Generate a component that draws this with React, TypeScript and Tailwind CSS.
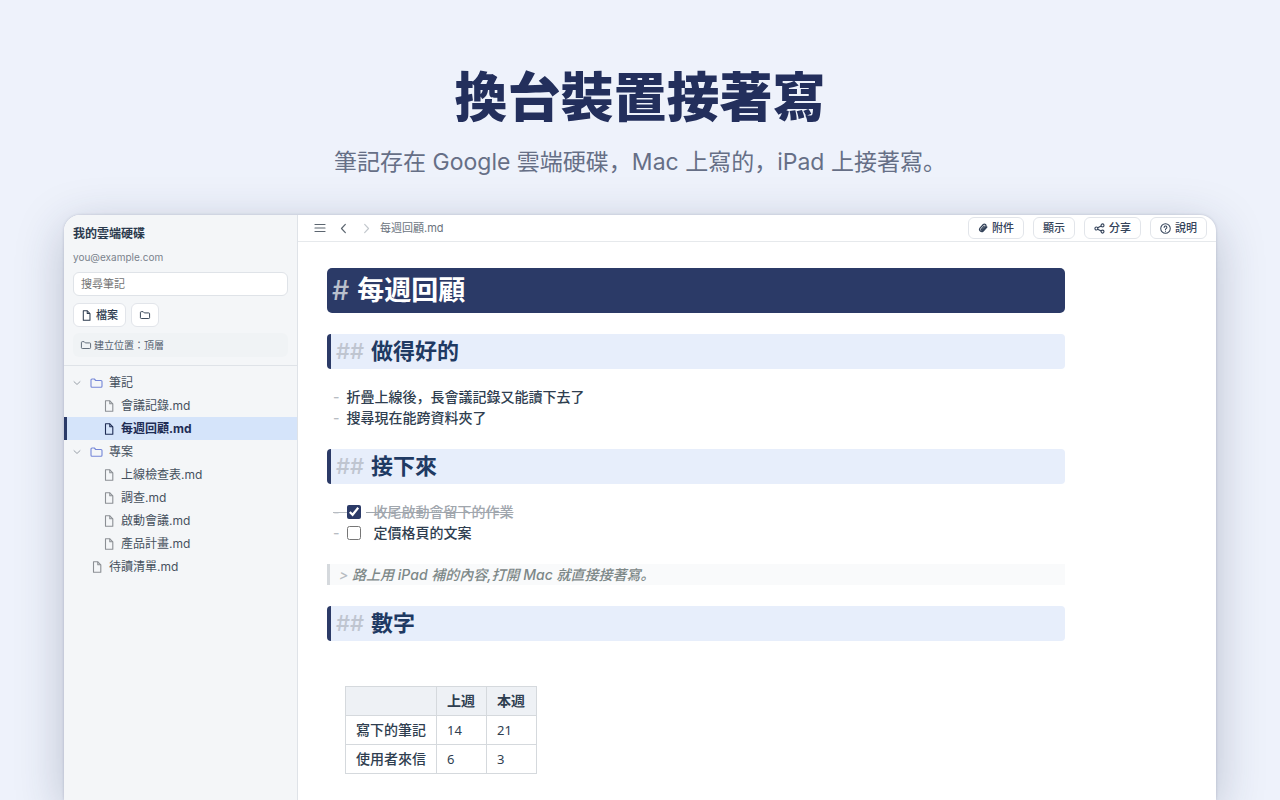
import { useState } from 'react';

interface TreeItem {
  name: string;
  depth: number;
  kind: 'folder' | 'file';
}

interface IconProps {
  className?: string;
}

const tree: TreeItem[] = [
  { name: '筆記', depth: 0, kind: 'folder' },
  { name: '會議記錄.md', depth: 1, kind: 'file' },
  { name: '每週回顧.md', depth: 1, kind: 'file' },
  { name: '專案', depth: 0, kind: 'folder' },
  { name: '上線檢查表.md', depth: 1, kind: 'file' },
  { name: '調查.md', depth: 1, kind: 'file' },
  { name: '啟動會議.md', depth: 1, kind: 'file' },
  { name: '產品計畫.md', depth: 1, kind: 'file' },
  { name: '待讀清單.md', depth: 0, kind: 'file' },
];

const rows = [
  { label: '寫下的筆記', last: 14, current: 21 },
  { label: '使用者來信', last: 6, current: 3 },
];

function FileIcon({ className }: IconProps) {
  return (
    <svg viewBox="0 0 12 12" className={className} fill="none" stroke="currentColor" strokeWidth="1.1" strokeLinejoin="round">
      <path d="M2.500 .8h4.300l3 3v7.400H2.500z" />
      <path d="M6.800 .8v3h3" />
    </svg>
  );
}

function FolderIcon({ className }: IconProps) {
  return (
    <svg viewBox="0 0 14 12" className={className} fill="none" stroke="currentColor" strokeWidth="1.1" strokeLinejoin="round">
      <path d="M1.500 3a1 1 0 0 1 1-1h2.300l1.400 1.500h5.300a1 1 0 0 1 1 1v4.700a1 1 0 0 1-1 1h-9a1 1 0 0 1-1-1z" />
    </svg>
  );
}

function ChevronIcon({ className }: IconProps) {
  return (
    <svg viewBox="0 0 12 12" className={className} fill="none" stroke="currentColor" strokeWidth="1.3" strokeLinecap="round" strokeLinejoin="round">
      <path d="M8 1.500 3.800 6 8 10.500" />
    </svg>
  );
}

function MenuIcon() {
  return (
    <svg viewBox="0 0 12 12" className="size-3" fill="none" stroke="currentColor" strokeWidth="1.2" strokeLinecap="round">
      <path d="M1 2.500h10M1 6h10M1 9.500h10" />
    </svg>
  );
}

function ClipIcon() {
  return (
    <svg viewBox="0 0 12 12" className="size-[10px]" fill="none" stroke="currentColor" strokeWidth="1.5" strokeLinecap="round" strokeLinejoin="round">
      <path d="M10.600 4.800 6.300 9.600a2.600 2.600 0 0 1-3.900-3.400l4-4.400a1.900 1.900 0 0 1 2.800 2.500L5.400 8.400a.8.8 0 0 1-1.200-1.100l3.200-3.500" />
    </svg>
  );
}

function ShareIcon() {
  return (
    <svg viewBox="0 0 12 12" className="size-[11px]" fill="none" stroke="currentColor" strokeWidth="1.2">
      <circle cx="2.600" cy="6" r="1.600" />
      <circle cx="9.300" cy="2.600" r="1.600" />
      <circle cx="9.300" cy="9.400" r="1.600" />
      <path d="m4 5.300 3.900-2M4 6.700l3.900 2" />
    </svg>
  );
}

function HelpIcon() {
  return (
    <svg viewBox="0 0 12 12" className="size-[11px]" fill="none" stroke="currentColor" strokeWidth="1.1" strokeLinecap="round">
      <circle cx="6" cy="6" r="5.200" />
      <path d="M4.500 4.800a1.500 1.500 0 1 1 2.200 1.300c-.5.300-.7.500-.7 1M6 8.800v.1" />
    </svg>
  );
}

function Sidebar() {
  const [selected, setSelected] = useState('每週回顧.md');

  return (
    <aside className="w-[234px] shrink-0 border-r border-[#dfe3e8] bg-[#f4f6f8]">
      <div className="border-b border-[#dfe3e8] px-[9px] pt-[9px] pb-2">
        <h2 className="text-[12px] leading-5 font-bold text-[#2b3a4d]">我的雲端硬碟</h2>
        <p className="mt-[3px] text-[10px] leading-5 text-[#7a828c]">you@example.com</p>
        <input
          type="search"
          aria-label="搜尋筆記"
          placeholder="搜尋筆記"
          className="mt-[5px] block h-6 w-full rounded-md border border-[#dfe3e8] bg-white px-[7px] text-[11px] text-[#2b3a4d] outline-none placeholder:text-[#757575]"
        />
        <div className="mt-[7px] flex gap-[5px]">
          <button className="flex h-6 items-center gap-1 rounded-md border border-[#e2e5ea] bg-white px-[7px] text-[11px] font-medium text-[#2b3a4d]">
            <FileIcon className="size-[11px]" />
            檔案
          </button>
          <button aria-label="新增資料夾" className="flex h-6 w-7 items-center justify-center rounded-md border border-[#e2e5ea] bg-white text-[#2b3a4d]">
            <FolderIcon className="h-[10px] w-3" />
          </button>
        </div>
        <div className="mt-[6px] flex h-6 items-center gap-[2px] rounded-md bg-[#f0f3f5] px-[7px] text-[10px] text-[#566270]">
          <FolderIcon className="h-[10px] w-3" />
          建立位置：頂層
        </div>
      </div>

      <ul className="py-[5px]">
        {tree.map((item) => {
          const active = item.name === selected;
          return (
            <li key={item.name}>
              <button
                onClick={() => item.kind === 'file' && setSelected(item.name)}
                className={`flex h-[23px] w-full items-center border-l-[3px] pl-[6px] text-left text-[12px] ${
                  active ? 'border-[#2b3a67] bg-[#d5e4fa] font-bold text-[#1f2d55]' : 'border-transparent text-[#46515e]'
                }`}
              >
                {item.kind === 'folder' ? (
                  <>
                    <ChevronIcon className="size-2 -rotate-90 text-[#8b939c]" />
                    <FolderIcon className="mr-[5px] ml-[8px] h-3 w-[15px] text-[#7587d8]" />
                  </>
                ) : (
                  <FileIcon
                    className={`mr-[6px] size-3 ${item.depth === 1 ? 'ml-[30px]' : 'ml-[18px]'} ${active ? 'text-[#1f2d55]' : 'text-[#8b8f94]'}`}
                  />
                )}
                {item.name}
              </button>
            </li>
          );
        })}
      </ul>
    </aside>
  );
}

const toolButton =
  'flex h-[22px] items-center gap-1 rounded-md border border-[#e2e5ea] bg-white px-[9px] text-[11px] font-medium text-[#34435a]';

function Toolbar() {
  return (
    <header className="flex h-[27px] items-center border-b border-[#e6e9ec] pr-[9px] pl-4 text-[#5c6670]">
      <button aria-label="選單">
        <MenuIcon />
      </button>
      <button aria-label="上一頁" className="ml-3">
        <ChevronIcon className="size-[11px]" />
      </button>
      <button aria-label="下一頁" className="ml-3 text-[#c3c8cd]">
        <ChevronIcon className="size-[11px] rotate-180" />
      </button>
      <span className="ml-2 text-[11px] text-[#6b747e]">每週回顧.md</span>
      <div className="ml-auto flex gap-[9px]">
        <button className={toolButton}>
          <ClipIcon />
          附件
        </button>
        <button className={toolButton}>顯示</button>
        <button className={toolButton}>
          <ShareIcon />
          分享
        </button>
        <button className={toolButton}>
          <HelpIcon />
          說明
        </button>
      </div>
    </header>
  );
}

function SectionTitle({ children }: { children: string }) {
  return (
    <h2 className="mt-[21px] flex h-[35px] items-center gap-[7px] rounded-[4px] border-l-4 border-[#2b3a67] bg-[#e7eefb] pl-[5px] text-[22px] font-bold text-[#1f3a63]">
      <span className="font-medium text-[#bfc5d0]">##</span>
      {children}
    </h2>
  );
}

interface TaskProps {
  text: string;
  initial: boolean;
}

function Task({ text, initial }: TaskProps) {
  const [done, setDone] = useState(initial);

  return (
    <li>
      <label className={`flex items-center whitespace-pre ${done ? 'text-[#a0a6ad]' : ''}`}>
        <span className={`min-w-[14px] text-[#b7bcc2] ${done ? 'line-through' : ''}`}>{'-  '}</span>
        <input type="checkbox" checked={done} onChange={() => setDone(!done)} className="size-[14px] accent-[#2b3a67]" />
        <span className={`ml-[5px] ${done ? 'line-through' : ''}`}>{`  ${text}`}</span>
      </label>
    </li>
  );
}

function Note() {
  return (
    <article className="mx-[29px] mt-[26px] max-w-[738px] text-[14px] text-[#2f3e50]">
      <h1 className="flex h-[45px] items-center gap-2 rounded-[5px] bg-[#2b3a67] px-[5px] pt-px text-[27px] font-bold text-white">
        <span className="font-medium text-[#b9c0cd]">#</span>
        每週回顧
      </h1>

      <SectionTitle>做得好的</SectionTitle>
      <ul className="mt-[17px] pl-[6px] leading-[21px] font-medium">
        <li className="flex gap-[7px]">
          <span className="text-[#b7bcc2]">-</span>折疊上線後，長會議記錄又能讀下去了
        </li>
        <li className="flex gap-[7px]">
          <span className="text-[#b7bcc2]">-</span>搜尋現在能跨資料夾了
        </li>
      </ul>

      <SectionTitle>接下來</SectionTitle>
      <ul className="mt-[17px] pl-[6px] leading-[21px] font-medium">
        <Task text="收尾啟動會留下的作業" initial={true} />
        <Task text="定價格頁的文案" initial={false} />
      </ul>

      <blockquote className="mt-[21px] border-l-[3px] border-[#d5d9dd] bg-[#f9fafb] pl-[9px] leading-[21px] font-medium text-[#7d8888] italic">
        <span className="text-[#b7bcc2]">&gt;</span> 路上用 iPad 補的內容,打開 Mac 就直接接著寫。
      </blockquote>

      <SectionTitle>數字</SectionTitle>
      <table className="mt-[45px] ml-[18px] border-collapse text-left leading-5">
        <thead className="bg-[#eef1f5]">
          <tr>
            <th className="border border-[#d5d9dd] px-[10px] py-1" />
            <th className="w-[50px] border border-[#d5d9dd] px-[10px] py-1 font-bold">上週</th>
            <th className="w-[50px] border border-[#d5d9dd] px-[10px] py-1 font-bold">本週</th>
          </tr>
        </thead>
        <tbody>
          {rows.map((row) => (
            <tr key={row.label}>
              <td className="border border-[#d5d9dd] px-[10px] py-1 font-medium">{row.label}</td>
              <td className="border border-[#d5d9dd] px-[10px] py-1 font-['Noto_Sans'] text-[13px]">{row.last}</td>
              <td className="border border-[#d5d9dd] px-[10px] py-1 font-['Noto_Sans'] text-[13px]">{row.current}</td>
            </tr>
          ))}
        </tbody>
      </table>
    </article>
  );
}

export default function App() {
  return (
    <div className="flex h-screen flex-col overflow-hidden bg-[#eef2fb] font-[Inter,'Noto_Sans_CJK_JP',sans-serif]">
      <div className="pt-[62px] text-center">
        <h1 className="text-[53px] leading-[72px] font-black text-[#232f5c]">換台裝置接著寫</h1>
        <p className="mt-[10px] text-[23px] leading-9 text-[#666f86]">筆記存在 Google 雲端硬碟，Mac 上寫的，iPad 上接著寫。</p>
      </div>
      <div className="mx-16 mt-[35px] flex flex-1 overflow-hidden rounded-t-[16px] bg-white shadow-[0_12px_48px_rgba(35,47,80,0.26),0_0_3px_rgba(35,47,80,0.2)]">
        <Sidebar />
        <main className="min-w-0 flex-1">
          <Toolbar />
          <Note />
        </main>
      </div>
    </div>
  );
}
